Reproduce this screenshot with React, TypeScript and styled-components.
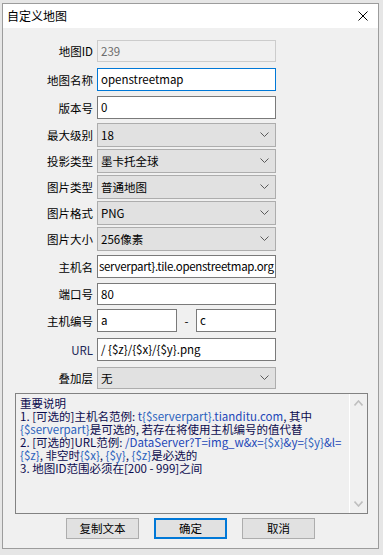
import React from "react";
import styled, { createGlobalStyle } from "styled-components";

const Global = createGlobalStyle`
  html, body { margin: 0; padding: 0; }
  body {
    background: #e6e6e6;
    font-family: "Noto Sans CJK SC", "Noto Sans", sans-serif;
    font-size: 11.5px;
    font-weight: 400;
    color: #000;
  }
  * { box-sizing: border-box; }
`;

const Page = styled.div`
  width: 383px;
  height: 555px;
  padding: 3px 4px 0 2px;
  overflow: hidden;
`;

const Window = styled.div`
  width: 377px;
  height: 546px;
  border: 1px solid #9c9c9c;
  background: #f0f0f0;
  display: flex;
  flex-direction: column;
`;

const TitleBar = styled.div`
  height: 24px;
  background: #ffffff;
  display: flex;
  align-items: center;
  justify-content: space-between;
  padding: 0 10px 0 4px;
`;

const Title = styled.span`
  font-size: 12px;
  line-height: 14px;
  color: #000;
`;

const CloseBtn = styled.div`
  width: 10px;
  height: 10px;
  display: flex;
`;

const Body = styled.div`
  flex: 1;
  display: flex;
  flex-direction: column;
  padding-top: 12px;
`;

const Row = styled.div<{ $h: number; $mb: number }>`
  display: grid;
  grid-template-columns: 90px 179px;
  column-gap: 4px;
  align-items: center;
  height: ${(p) => p.$h}px;
  margin-bottom: ${(p) => p.$mb}px;
`;

const Label = styled.span<{ $latin?: boolean }>`
  text-align: right;
  font-size: 11.5px;
  line-height: 14px;
  color: ${(p) => (p.$latin ? "#1e2858" : "#000")};
  white-space: nowrap;
`;

const TextBox = styled.div<{ $state?: "disabled" | "focus" | "normal"; $h: number; $tight?: boolean }>`
  height: ${(p) => p.$h}px;
  width: 100%;
  border: 1px solid
    ${(p) =>
      p.$state === "disabled" ? "#cccccc" : p.$state === "focus" ? "#0078d7" : "#7a7a7a"};
  background: ${(p) => (p.$state === "disabled" ? "#f0f0f0" : "#ffffff")};
  color: ${(p) => (p.$state === "disabled" ? "#6d6d6d" : "#000")};
  padding: ${(p) => (p.$tight ? "0 1px 1px" : "0 3px 1px")};
  letter-spacing: ${(p) => (p.$tight ? "-0.32px" : "normal")};
  display: flex;
  align-items: center;
  overflow: hidden;
  white-space: nowrap;
  font-size: 11.5px;
  line-height: 14px;
`;

const Select = styled.div<{ $h: number }>`
  height: ${(p) => p.$h}px;
  width: 100%;
  border: 1px solid #adadad;
  background: #e1e1e1;
  padding: 0 6px 1px 3px;
  display: flex;
  align-items: center;
  justify-content: space-between;
  font-size: 11.5px;
  line-height: 14px;
  white-space: nowrap;
`;

const Chevron = () => (
  <svg width="9" height="5" viewBox="0 0 9 5" style={{ display: "block" }}>
    <path d="M0.5 0.5 L4.5 4.5 L8.5 0.5" fill="none" stroke="#5a5a5a" strokeWidth="1" />
  </svg>
);

const Pair = styled.div`
  display: grid;
  grid-template-columns: 80px 19px 80px;
  align-items: center;
`;

const Dash = styled.span`
  text-align: center;
  font-size: 11.5px;
  line-height: 14px;
`;

const Memo = styled.div`
  margin: 0 0 0 12px;
  width: 353px;
  height: 121px;
  border: 1px solid #828282;
  background: #f0f0f0;
  display: flex;
`;

const MemoText = styled.div`
  flex: 1;
  padding: 3px 0 0 4px;
  font-size: 11.5px;
  line-height: 13px;
  color: #0b0b4e;
  white-space: nowrap;
  overflow: hidden;
`;

const Line = styled.div`
  height: 13px;
`;

const Ex = styled.span`
  display: inline-block;
  line-height: 13px;
  color: #2347b8;
`;

const Var = styled.span`
  display: inline-block;
  line-height: 13px;
  color: #2a62bd;
`;

const ScrollBar = styled.div`
  width: 18px;
  border-left: 1px solid #ffffff;
  display: flex;
  flex-direction: column;
  justify-content: space-between;
  align-items: center;
  padding: 6px 0 6px;
`;

const Arrow = ({ up }: { up?: boolean }) => (
  <svg width="9" height="6" viewBox="0 0 9 6" style={{ display: "block" }}>
    <path
      d={up ? "M0.5 5.5 L4.5 1 L8.5 5.5" : "M0.5 0.5 L4.5 5 L8.5 0.5"}
      fill="none"
      stroke="#bfbfbf"
      strokeWidth="1.6"
    />
  </svg>
);

const Buttons = styled.div`
  display: flex;
  justify-content: center;
  gap: 15px;
  margin-top: 4px;
`;

const Button = styled.div<{ $default?: boolean }>`
  width: 73px;
  height: 21px;
  background: #e1e1e1;
  border: 1px solid ${(p) => (p.$default ? "#0078d7" : "#adadad")};
  box-shadow: ${(p) => (p.$default ? "inset 0 0 0 1px #0078d7" : "none")};
  display: flex;
  align-items: center;
  justify-content: center;
  font-size: 11.5px;
  line-height: 14px;
  padding-bottom: 1px;
`;

export default function App() {
  return (
    <Page>
      <Global />
      <Window>
        <TitleBar>
          <Title>自定义地图</Title>
          <CloseBtn>
            <svg width="10" height="10" viewBox="0 0 10 10">
              <path d="M0.5 0.5 L9.5 9.5 M9.5 0.5 L0.5 9.5" stroke="#000" strokeWidth="1" />
            </svg>
          </CloseBtn>
        </TitleBar>
        <Body>
          <Row $h={22} $mb={6}>
            <Label>地图ID</Label>
            <TextBox $h={22} $state="disabled">239</TextBox>
          </Row>
          <Row $h={23} $mb={5}>
            <Label>地图名称</Label>
            <TextBox $h={23} $state="focus">openstreetmap</TextBox>
          </Row>
          <Row $h={23} $mb={4}>
            <Label>版本号</Label>
            <TextBox $h={23}>0</TextBox>
          </Row>
          <Row $h={24} $mb={2}>
            <Label>最大级别</Label>
            <Select $h={24}>
              <span>18</span>
              <Chevron />
            </Select>
          </Row>
          <Row $h={24} $mb={2}>
            <Label>投影类型</Label>
            <Select $h={24}>
              <span>墨卡托全球</span>
              <Chevron />
            </Select>
          </Row>
          <Row $h={24} $mb={2}>
            <Label>图片类型</Label>
            <Select $h={24}>
              <span>普通地图</span>
              <Chevron />
            </Select>
          </Row>
          <Row $h={24} $mb={2}>
            <Label>图片格式</Label>
            <Select $h={24}>
              <span>PNG</span>
              <Chevron />
            </Select>
          </Row>
          <Row $h={24} $mb={4}>
            <Label>图片大小</Label>
            <Select $h={24}>
              <span>256像素</span>
              <Chevron />
            </Select>
          </Row>
          <Row $h={23} $mb={5}>
            <Label>主机名</Label>
            <TextBox $h={23} $tight>{"serverpart}.tile.openstreetmap.org"}</TextBox>
          </Row>
          <Row $h={22} $mb={4}>
            <Label>端口号</Label>
            <TextBox $h={22}>80</TextBox>
          </Row>
          <Row $h={23} $mb={6}>
            <Label>主机编号</Label>
            <Pair>
              <TextBox $h={23}>a</TextBox>
              <Dash>-</Dash>
              <TextBox $h={23}>c</TextBox>
            </Pair>
          </Row>
          <Row $h={23} $mb={6}>
            <Label $latin>URL</Label>
            <TextBox $h={23}>{"/ {$z}/{$x}/{$y}.png"}</TextBox>
          </Row>
          <Row $h={22} $mb={4}>
            <Label>叠加层</Label>
            <Select $h={22}>
              <span>无</span>
              <Chevron />
            </Select>
          </Row>
          <Memo>
            <MemoText>
              <Line>重要说明</Line>
              <Line>
                1. [可选的]主机名范例: <Ex>t<Var>{"{$serverpart}"}</Var>.tianditu.com</Ex>, 其中
              </Line>
              <Line>
                <Var>{"{$serverpart}"}</Var>是可选的, 若存在将使用主机编号的值代替
              </Line>
              <Line>
                2. [可选的]URL范例: <Ex>/DataServer?T=img_w&amp;x=<Var>{"{$x}"}</Var>&amp;y=<Var>{"{$y}"}</Var>&amp;l=</Ex>
              </Line>
              <Line>
                <Var>{"{$z}"}</Var>, 非空时<Var>{"{$x}"}</Var>, <Var>{"{$y}"}</Var>, <Var>{"{$z}"}</Var>是必选的
              </Line>
              <Line>3. 地图ID范围必须在[200 - 999]之间</Line>
            </MemoText>
            <ScrollBar>
              <Arrow up />
              <Arrow />
            </ScrollBar>
          </Memo>
          <Buttons>
            <Button>复制文本</Button>
            <Button $default>确定</Button>
            <Button>取消</Button>
          </Buttons>
        </Body>
      </Window>
    </Page>
  );
}
